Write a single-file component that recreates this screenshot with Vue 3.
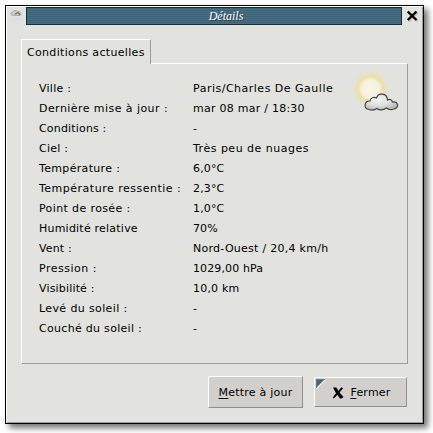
<script setup>
// Each cell: text, tracking in px
const rows = [
  [['Ville :', 0.25], ['Paris/Charles De Gaulle', 0.5]],
  [['Dernière mise à jour :', 0.44], ['mar 08 mar / 18:30', 0.25]],
  [['Conditions :', 0.17], ['-', 0]],
  [['Ciel :', 0.25], ['Très peu de nuages', 0.5]],
  [['Température :', 0.33], ['6,0°C', 0.15]],
  [['Température ressentie :', 0.5], ['2,3°C', 0.15]],
  [['Point de rosée :', 0.38], ['1,0°C', 0.15]],
  [['Humidité relative', 0.22], ['70%', 0.1]],
  [['Vent :', 0.15], ['Nord-Ouest / 20,4 km/h', 0.27]],
  [['Pression :', 0.5], ['1029,00 hPa', 0.12]],
  [['Visibilité :', 0.17], ['10,0 km', 0.2]],
  [['Levé du soleil :', 0.38], ['-', 0]],
  [['Couché du soleil :', 0.3], ['-', 0]],
].map(([label, value]) => ({
  label: label[0],
  labelStyle: { letterSpacing: label[1] + 'px' },
  value: value[0],
  valueStyle: { letterSpacing: value[1] + 'px' },
}))
</script>

<template>
  <div class="desktop">
    <div class="window">
      <header class="titlebar">
        <svg class="app-icon" width="14" height="16" viewBox="0 0 14 16">
          <path d="M5 9l-2 5M8 9l-2 5M11 9l-2 4" stroke="#d0dce6" stroke-width="1.200" />
          <path d="M3.500 7.200C1 7 1.200 4.300 3.700 4.300C4.300 2.200 7.500 1.800 8.700 3.400C12 2.800 13.500 7.200 10.500 7.500Z" fill="#cfcfcd" stroke="#a8a8a6" />
          <path d="M6 6l3-1.500l2 2.500" fill="none" stroke="#777" stroke-width="1.400" />
        </svg>
        <div class="caption">Détails</div>
        <svg class="close" width="20" height="18" viewBox="0 0 20 18">
          <path d="M6.500 5.500l9 8.500M15.500 5.500l-9 8.500" stroke="#bcbcb7" stroke-width="2.500" />
          <path d="M5.700 4.500l8.800 8.500M14.500 4.500l-8.800 8.500" stroke="#000" stroke-width="2.300" />
        </svg>
      </header>

      <main class="notebook">
        <div class="tab">Conditions actuelles</div>
        <section class="panel">
          <dl class="details">
            <template v-for="row in rows" :key="row.label">
              <dt :style="row.labelStyle">{{ row.label }}</dt>
              <dd :style="row.valueStyle">{{ row.value }}</dd>
            </template>
          </dl>
          <svg class="weather" width="50" height="50" viewBox="0 0 50 50">
            <defs>
              <radialGradient id="halo">
                <stop offset="0" stop-color="#f9f5e8" />
                <stop offset=".5" stop-color="#f7f0dc" />
                <stop offset=".64" stop-color="#efe0b0" />
                <stop offset=".78" stop-color="#eddfb0" stop-opacity=".85" />
                <stop offset="1" stop-color="#e6e2cc" stop-opacity="0" />
              </radialGradient>
              <radialGradient id="cloud" cx=".4" cy=".35" r=".65">
                <stop offset="0" stop-color="#f4f4f4" />
                <stop offset=".6" stop-color="#dedede" />
                <stop offset="1" stop-color="#b9b9b9" />
              </radialGradient>
            </defs>
            <circle cx="19.500" cy="20" r="18.500" fill="url(#halo)" />
            <path d="M18 40.500C12.500 40 12.800 31.500 19 32C19.500 29 22.500 27.500 25.500 29C27 23.500 36 23.500 36.500 31C39 29.500 41 31 41.500 33C47.500 32.500 48.500 39 43 40C39.500 41 37 40.500 35.500 39C32 41.500 28 41.500 26 39.500C24 41 21 41.500 18 40.500Z" fill="url(#cloud)" stroke="#484848" stroke-width="1.200" />
          </svg>
        </section>
      </main>

      <footer class="actions">
        <button class="btn update"><span><u>M</u>ettre à jour</span></button>
        <button class="btn dismiss">
          <svg class="corner" width="10" height="10" viewBox="0 0 10 10">
            <path d="M0 0H9L0 9Z" fill="#42687e" />
            <path d="M.5 9V.5H9" fill="none" stroke="#777" />
            <path d="M9.500 .5L.5 9.500" stroke="#fff" />
          </svg>
          <svg class="cross" width="12" height="12" viewBox="0 0 12 12">
            <path d="M1 .5H4.300L6.300 3.700L9.500 .3L11 1.300L7.600 5.400L11.500 10L9.700 11.500H8L5.300 7.800L2 11.600L.5 10.700L4 6.200Z" fill="#000" />
          </svg>
          <span><u>F</u>ermer</span>
        </button>
      </footer>
    </div>
  </div>
</template>

<style>
body {
  background: #fff;
  overflow: hidden;
}
</style>

<style scoped>
.desktop {
  box-sizing: border-box;
  width: 433px;
  height: 433px;
  padding: 5px;
  overflow: hidden;
  font: 11px/20px "DejaVu Sans", sans-serif;
  color: #000;
}
.window {
  box-sizing: border-box;
  width: 419px;
  height: 419px;
  border: 1px solid #000;
  background: #e2e3de;
  box-shadow: inset 1px 1px #fff, inset -1px -1px #9d9e98, 4px 4px 6px rgba(0, 0, 0, 0.55);
}
.titlebar {
  display: flex;
  height: 18px;
  padding: 1px 1px 0;
}
.app-icon {
  margin: 1px 3px 0 2px;
}
.caption {
  box-sizing: border-box;
  width: 377px;
  height: 18px;
  padding-left: 24px;
  border: 1px solid #142c3c;
  background: repeating-linear-gradient(#3e6379 0 1px, #486e82 1px 2px);
  color: #fff;
  font: italic 12px/17px "Liberation Serif", serif;
  text-align: center;
  text-shadow: 1px 1px #263b49;
}
.close {
  flex: none;
}
.notebook {
  padding: 14px 0 0 15px;
}
.tab {
  position: relative;
  z-index: 1;
  box-sizing: border-box;
  width: 130px;
  height: 25px;
  padding: 3px 0 0 5px;
  border: 1px solid #fff;
  border-right-color: #9c9d97;
  border-bottom: 0;
  background: #e2e3de;
  letter-spacing: 0.33px;
  white-space: nowrap;
}
.panel {
  position: relative;
  box-sizing: border-box;
  width: 387px;
  height: 301px;
  margin-top: -1px;
  padding: 15px 0 0 17px;
  border: 1px solid;
  border-color: #fff #9c9d97 #9c9d97 #fff;
}
.details {
  display: grid;
  grid-template-columns: 154px 1fr;
  grid-auto-rows: 20px;
  margin: 0;
  white-space: nowrap;
}
.details dd {
  margin: 0;
}
.weather {
  position: absolute;
  left: 329px;
  top: 5px;
}
.actions {
  display: flex;
  align-items: center;
  gap: 11px;
  padding: 12px 0 0 202px;
}
.btn {
  position: relative;
  box-sizing: border-box;
  display: flex;
  align-items: center;
  justify-content: center;
  padding: 1px 0 0;
  border: 1px solid;
  border-color: #fff #8f908b #8f908b #fff;
  border-radius: 0;
  background: #d2d0cd;
  color: #000;
  font: inherit;
  letter-spacing: 0.22px;
}
.btn u {
  text-underline-offset: 2px;
}
.update {
  width: 95px;
  height: 32px;
}
.dismiss {
  width: 93px;
  height: 30px;
  padding-left: 2px;
  gap: 6px;
}
.corner {
  position: absolute;
  left: 1px;
  top: 1px;
}
</style>
